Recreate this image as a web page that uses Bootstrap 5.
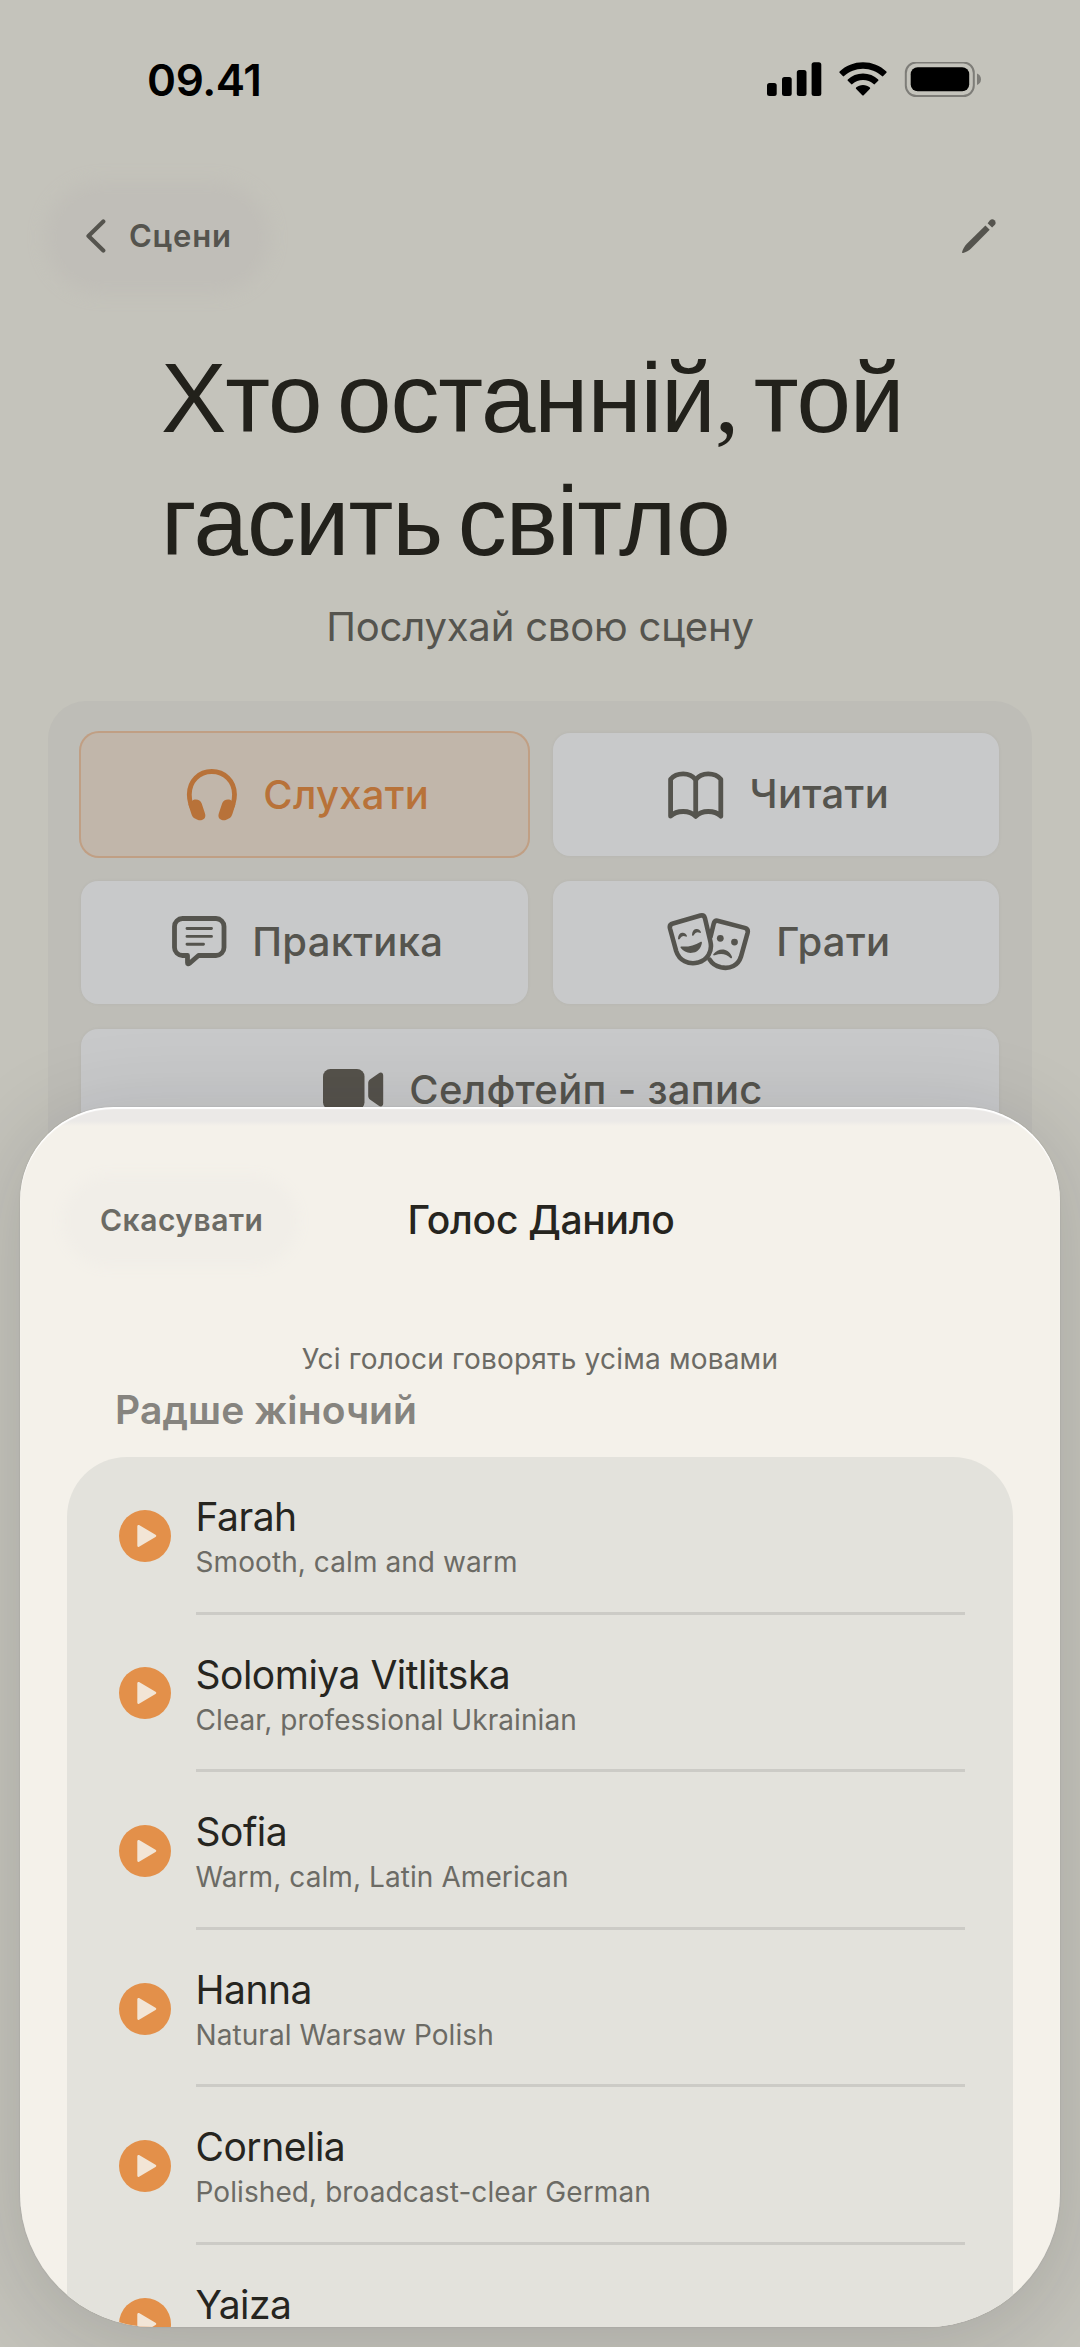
<!DOCTYPE html>
<html lang="uk">
<head>
<meta charset="utf-8">
<meta name="viewport" content="width=device-width, initial-scale=1">
<title>Хто останній, той гасить світло</title>
<link href="https://cdn.jsdelivr.net/npm/bootstrap@5.3.0/dist/css/bootstrap.min.css" rel="stylesheet">
<style>
  body { font-family: Inter, sans-serif; background: #c4c3bb; color: #55544e; width: 1080px; height: 2347px; }
  .phone { height: 2347px; }
  svg { display: block; flex: none; }

  .status-bar { height: 160px; padding: 0 98px 0 147px; }
  .clock { font-size: 44px; font-weight: 600; line-height: 48px; letter-spacing: -.4px; color: #000; }

  .top-nav { height: 152px; padding: 0 83px 0 85px; }
  .back-link { font-size: 31px; font-weight: 600; line-height: 40px; letter-spacing: .75px; gap: 23px; color: #55544e; }
  .glow { position: relative; isolation: isolate; }
  .glow::before { content: ""; position: absolute; z-index: -1; border-radius: 50px; }
  .back-link::before { inset: -22px -26px -25px -28px; background: #c0beb8; box-shadow: 0 0 18px 12px #c0beb8; }

  .scene-title { font-family: "Liberation Sans", sans-serif; font-size: 98px; line-height: 122px; letter-spacing: -1.1px; word-spacing: -10.5px; color: #22211b; margin: 25px 0 0 161px; font-weight: 400; }
  .scene-title .comma { font-family: "Liberation Serif", serif; }
  .scene-sub { font-size: 40px; line-height: 48px; letter-spacing: -.2px; margin: 21px 0 0; }

  .mode-panel { margin: 50px 48px 0; padding: 32px 33px 0 33px; height: 700px; border-radius: 38px 38px 0 0; background: #bebdb7; }
  .mode-grid { display: grid; grid-template-columns: 447px 446px; column-gap: 24.5px; row-gap: 25px; }
  .mode-btn { height: 122.5px; border: 0; border-radius: 17px; background: #c8c9ca; color: #55544e; font-size: 40px; font-weight: 500; letter-spacing: .3px; line-height: 48px; padding: 0 0 0 6px; gap: 25.5px; box-shadow: 0 0 3px rgba(110,110,120,.1); }
  .mode-btn.is-active { background: #c1b6aa; color: #b87239; margin: -2px; height: 127px; box-shadow: inset 0 0 0 2px #c09f84; border-radius: 20px; }

  .voice-sheet { position: absolute; left: 20px; top: 1107px; width: 1040px; height: 1220px; border-radius: 94px 94px 134px 134px; background: linear-gradient(#ebe9e7 0 14px, #f4f1ea 19px); box-shadow: 0 14px 90px 4px rgba(20,20,30,.15), 0 0 2px rgba(0,0,0,.12); overflow: hidden; }
  .voice-sheet::after { content: ""; position: absolute; inset: 0; border-radius: inherit; box-shadow: inset 0 2px 1px #fff; pointer-events: none; }
  .sheet-head { height: 225px; padding-left: 80px; }
  .cancel-link { font-size: 30px; font-weight: 600; letter-spacing: .5px; line-height: 40px; color: #6c6b65; }
  .cancel-link::before { inset: -15px -26px -17px -28px; background: #f1eee8; box-shadow: 0 0 14px 10px #f1eee8; }
  .sheet-title { position: absolute; left: 2px; right: 0; font-size: 39px; font-weight: 500; letter-spacing: -.3px; line-height: 48px; color: #26251f; }
  .sheet-note { font-size: 28px; line-height: 36px; letter-spacing: .2px; padding-top: 9px; color: #6c6b65; }
  .group-label { font-size: 39px; font-weight: 600; line-height: 46px; letter-spacing: .1px; color: #86847f; margin: 10px 0 0 95px; }
  .voice-list { margin: 24px 47px 0; border-radius: 60px 60px 0 0; background: #e3e2dc; height: 900px; }
  .voice-row { height: 157.6px; padding: 0 48px 0 52px; gap: 24.5px; }
  .voice-info { height: 157.6px; padding-top: 36px; border-bottom: 3px solid #cccbc6; }
  .voice-name { font-size: 39px; line-height: 48px; letter-spacing: -.5px; color: #26251f; }
  .voice-desc { font-size: 28px; line-height: 36px; letter-spacing: .08px; color: #6c6b65; margin-top: 3px; }
</style>
</head>
<body>
<div class="phone position-relative overflow-hidden">

  <div class="status-bar d-flex align-items-center justify-content-between">
    <span class="clock">09.41</span>
    <svg width="215" height="36" viewBox="766 62 215 36">
      <rect x="766" y="83" width="9.7" height="13" rx="2.5"/>
      <rect x="781" y="77" width="9.7" height="19" rx="2.5"/>
      <rect x="795.8" y="70" width="9.7" height="26" rx="2.5"/>
      <rect x="810.6" y="62.3" width="9.7" height="33.7" rx="2.5"/>
      <path d="M862 62.300c9 0 17.200 3.400 23.400 9.200.4.400.4.900 0 1.300l-3.200 3.300c-.4.400-.9.400-1.300 0-5-4.600-11.600-7.400-18.900-7.400s-13.900 2.800-18.900 7.400c-.4.400-.9.400-1.300 0l-3.200-3.300c-.4-.4-.4-.9 0-1.300 6.200-5.800 14.400-9.200 23.400-9.200z"/>
      <path d="M862 73.600c5.900 0 11.200 2.200 15.200 5.900.4.400.4.900 0 1.300l-3.300 3.300c-.4.400-.9.400-1.300 0a15.600 15.600 0 0 0-21.200 0c-.4.400-.9.400-1.300 0l-3.300-3.300c-.4-.4-.4-.9 0-1.300 4-3.700 9.300-5.900 15.200-5.900z"/>
      <path d="M862 85c2.700 0 5 .9 6.900 2.400.4.400.4.900.1 1.300l-6.300 6.600c-.4.400-1 .4-1.400 0l-6.300-6.600c-.3-.4-.3-.9.100-1.300 1.900-1.500 4.200-2.400 6.900-2.400z"/>
      <rect x="904.800" y="62.500" width="68" height="33.500" rx="10.500" fill="none" stroke="#7e7d78" stroke-width="2"/>
      <rect x="909.700" y="67.300" width="58.500" height="23.900" rx="7"/>
      <path d="M976 73.500c2.600 1 4 3.100 4 5.800s-1.400 4.800-4 5.800z" fill="#7e7d78"/>
    </svg>
  </div>

  <nav class="top-nav d-flex align-items-center justify-content-between">
    <a class="back-link glow d-flex align-items-center text-decoration-none" href="#">
      <svg width="21" height="34" viewBox="0 0 21 34" fill="none" stroke="#55544e" stroke-width="4.200" stroke-linecap="round" stroke-linejoin="round"><path d="M18.300 2.500L3.500 17l14.800 14.500"/></svg>
      <span>Сцени</span>
    </a>
    <svg width="36" height="36" viewBox="960 218 36 36" fill="#55544e">
      <path d="M984.400 225.400l4.300 4.300-18.600 18.700c-2 1.900-5.300 3.700-8 4.500-.7.200-1.200-.3-1-1 .8-2.700 2.500-5.900 4.500-7.900z"/>
      <path d="M986.600 223.200l2.200-2.600c1.300-1.500 3.200-1.700 4.700-.4 1.500 1.400 1.500 3.500.2 4.800l-2.600 2.400z"/>
    </svg>
  </nav>

  <h1 class="scene-title">Хто останній<span class="comma">,</span> той<br>гасить світло</h1>
  <p class="scene-sub text-center">Послухай свою сцену</p>

  <div class="mode-panel">
    <div class="mode-grid">
      <button class="btn mode-btn is-active d-flex align-items-center justify-content-center">
        <svg width="52" height="52" viewBox="186 768 52 52">
          <path d="M194.500 811c-3-5-5.200-10.500-5.200-17.500 0-13.500 9.800-23 22.500-23s22.700 9.500 22.700 23c0 7-2.200 12.500-5.200 17.500" fill="none" stroke="#b87239" stroke-width="4.800"/>
          <path d="M193.200 799c3.600-1.300 7.300.1 8.500 3.600l3.300 10c1 3.200-.3 5.700-3 6.500-2.500.7-5-.1-6.500-1.300-2.300-1-3.400-2.500-4.100-4.800l-3-9.500zM230.600 799c-3.600-1.300-7.300.1-8.500 3.600l-3.300 10c-1 3.200.3 5.700 3 6.500 2.500.7 5-.1 6.500-1.300 2.300-1 3.400-2.500 4.100-4.800l3-9.500z" fill="#b87239"/>
        </svg>
        <span>Слухати</span>
      </button>
      <button class="btn mode-btn d-flex align-items-center justify-content-center">
        <svg width="56" height="50" viewBox="667 769 56 50" fill="none" stroke="#55544e" stroke-width="4.800" stroke-linejoin="round" stroke-linecap="round">
          <path d="M694.700 780.500c-2.800-3.700-7.500-5.800-12.500-5.800s-9.700 1.900-12.600 5.300v37c3-3.100 7.500-4.700 12.600-4.700s9.500 1.700 12.500 4.900c3-3.200 7.400-4.900 12.500-4.900s9.600 1.600 12.600 4.700v-37c-2.900-3.400-7.600-5.300-12.600-5.300s-9.700 2.100-12.500 5.800zv36.500" transform="translate(0 -.8)"/>
        </svg>
        <span>Читати</span>
      </button>
      <button class="btn mode-btn d-flex align-items-center justify-content-center">
        <svg width="55" height="52" viewBox="172 916 55 52" fill="none" stroke="#55544e" stroke-linejoin="round" stroke-linecap="round">
          <path d="M182.500 918.500h33.500a8 8 0 0 1 8 8v21a8 8 0 0 1-8 8h-17.500l-9.200 8c-1 .8-1.800.4-1.800-.8v-7.200h-5a8 8 0 0 1-8-8v-21a8 8 0 0 1 8-8z" stroke-width="4.800"/>
          <path d="M187 928.500h24.500M187 936.400h24.500M187 944.200h16.500" stroke-width="2.900"/>
        </svg>
        <span>Практика</span>
      </button>
      <button class="btn mode-btn d-flex align-items-center justify-content-center">
        <svg width="84" height="60" viewBox="667 921 84 60" fill="none" stroke="#55544e" stroke-width="4.600" stroke-linejoin="round" stroke-linecap="round">
          <path d="M672 931.500l27.500-8c2.200-.5 3.800.4 4.400 2.600l5.500 23.500c2.300 10-3 18.500-12.500 21-9.500 2.200-18.700-2-21.700-11.500l-6.200-22.600c-.6-2.500.4-4.300 3-5z" transform="translate(1 1)"/>
          <path d="M710.500 946l3.200-13.200c.6-2.400 2.300-3.500 4.700-2.900l26.300 7c2.400.7 3.500 2.500 2.900 4.900l-6.700 24c-2.700 8.600-10.700 12.500-20 10.500-5.300-1.300-9-4-11.200-7.700"/>
          <g fill="#55544e" stroke="none">
            <path d="M681.500 955.500c6.800.4 13.200-1 18.900-4.600 1-.6 1.700-.1 1.500 1-.9 5-3.800 8.600-8.400 9.700-5.200 1.200-9.800-.8-12.700-4.600-.6-.9-.3-1.500.7-1.500z"/>
            <path d="M678 947.500c.2-3.300 1.700-5.300 4-5.700 2-.4 3.700.5 4.800 2.600.4 1-.4 1.500-1.200 1.100-2-1.300-4.500-.3-5.700 2.300-.6 1.200-1.800 1-1.900-.3zM692 943.800c.2-3.300 1.700-5.300 4-5.700 2-.4 3.700.5 4.800 2.600.4 1-.4 1.500-1.200 1.100-2-1.300-4.500-.3-5.700 2.300-.6 1.200-1.800 1-1.900-.3z"/>
            <circle cx="720.300" cy="947.300" r="3.400"/><circle cx="734.500" cy="951.100" r="3.400"/>
            <path d="M713.500 963c4.200-5.800 14.600-7.200 18.500 2.800.4 1.400-.6 2-1.600 1.100-4.100-3.900-9.200-5.100-15.500-2.600-1.400.5-2.200-.2-1.400-1.300z"/>
          </g>
        </svg>
        <span>Грати</span>
      </button>
      <button class="btn mode-btn d-flex align-items-center justify-content-center" style="grid-column: 1 / -1">
        <svg width="61" height="41" viewBox="0 0 61 41" fill="#55524b">
          <rect x="0" y="0" width="41.500" height="41" rx="7.500"/>
          <path d="M45.200 14.200c0-1.500.5-2.700 1.700-3.700l8.600-6c2.300-1.900 4.700-.9 4.700 1.900v28.200c0 2.800-2.400 3.800-4.700 1.900l-8.600-6c-1.200-1-1.700-2.200-1.700-3.700z"/>
        </svg>
        <span>Селфтейп - запис</span>
      </button>
    </div>
  </div>

  <section class="voice-sheet">
    <header class="sheet-head d-flex align-items-center">
      <h2 class="sheet-title text-center m-0">Голос Данило</h2>
      <a class="cancel-link glow text-decoration-none" href="#">Скасувати</a>
    </header>
    <p class="sheet-note text-center m-0">Усі голоси говорять усіма мовами</p>
    <h3 class="group-label">Радше жіночий</h3>
    <div class="voice-list">
      <div class="voice-row d-flex align-items-center">
        <svg width="52" height="52" viewBox="0 0 52 52"><circle cx="26" cy="26" r="26" fill="#e3904a"/><path d="M18.300 16.500c0-1.300 1-1.900 2.200-1.200l16 9.500c1 .6 1 1.600 0 2.200l-16 9.600c-1.200.7-2.200.1-2.200-1.200z" fill="#f2e5d6"/></svg>
        <div class="voice-info flex-grow-1"><div class="voice-name">Farah</div><div class="voice-desc">Smooth, calm and warm</div></div>
      </div>
      <div class="voice-row d-flex align-items-center">
        <svg width="52" height="52" viewBox="0 0 52 52"><circle cx="26" cy="26" r="26" fill="#e3904a"/><path d="M18.300 16.500c0-1.300 1-1.900 2.200-1.200l16 9.500c1 .6 1 1.600 0 2.200l-16 9.600c-1.200.7-2.200.1-2.200-1.200z" fill="#f2e5d6"/></svg>
        <div class="voice-info flex-grow-1"><div class="voice-name">Solomiya Vitlitska</div><div class="voice-desc">Clear, professional Ukrainian</div></div>
      </div>
      <div class="voice-row d-flex align-items-center">
        <svg width="52" height="52" viewBox="0 0 52 52"><circle cx="26" cy="26" r="26" fill="#e3904a"/><path d="M18.300 16.500c0-1.300 1-1.900 2.200-1.200l16 9.500c1 .6 1 1.600 0 2.200l-16 9.600c-1.200.7-2.200.1-2.200-1.200z" fill="#f2e5d6"/></svg>
        <div class="voice-info flex-grow-1"><div class="voice-name">Sofia</div><div class="voice-desc">Warm, calm, Latin American</div></div>
      </div>
      <div class="voice-row d-flex align-items-center">
        <svg width="52" height="52" viewBox="0 0 52 52"><circle cx="26" cy="26" r="26" fill="#e3904a"/><path d="M18.300 16.500c0-1.300 1-1.900 2.200-1.200l16 9.500c1 .6 1 1.600 0 2.200l-16 9.600c-1.200.7-2.200.1-2.200-1.200z" fill="#f2e5d6"/></svg>
        <div class="voice-info flex-grow-1"><div class="voice-name">Hanna</div><div class="voice-desc">Natural Warsaw Polish</div></div>
      </div>
      <div class="voice-row d-flex align-items-center">
        <svg width="52" height="52" viewBox="0 0 52 52"><circle cx="26" cy="26" r="26" fill="#e3904a"/><path d="M18.300 16.500c0-1.300 1-1.900 2.200-1.200l16 9.500c1 .6 1 1.600 0 2.200l-16 9.600c-1.200.7-2.200.1-2.200-1.200z" fill="#f2e5d6"/></svg>
        <div class="voice-info flex-grow-1"><div class="voice-name">Cornelia</div><div class="voice-desc">Polished, broadcast-clear German</div></div>
      </div>
      <div class="voice-row d-flex align-items-center">
        <svg width="52" height="52" viewBox="0 0 52 52"><circle cx="26" cy="26" r="26" fill="#e3904a"/><path d="M18.300 16.500c0-1.300 1-1.900 2.200-1.200l16 9.500c1 .6 1 1.600 0 2.200l-16 9.600c-1.200.7-2.200.1-2.200-1.200z" fill="#f2e5d6"/></svg>
        <div class="voice-info flex-grow-1"><div class="voice-name">Yaiza</div></div>
      </div>
    </div>
  </section>
</div>
<script src="https://cdn.jsdelivr.net/npm/bootstrap@5.3.0/dist/js/bootstrap.bundle.min.js"></script>
</body>
</html>
